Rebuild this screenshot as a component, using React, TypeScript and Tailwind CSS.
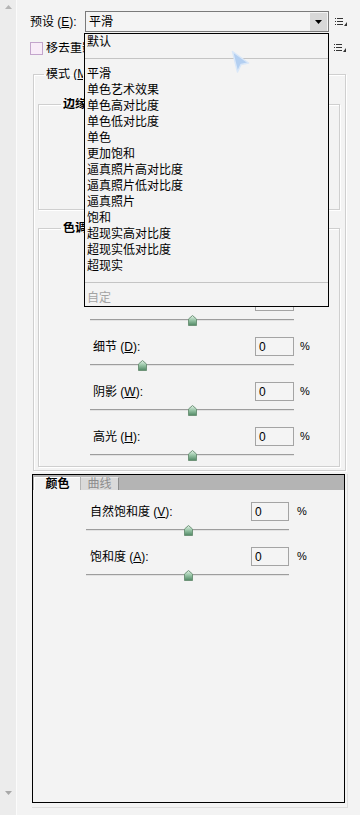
import React from 'react';

const presets = [
  '平滑',
  '单色艺术效果',
  '单色高对比度',
  '单色低对比度',
  '单色',
  '更加饱和',
  '逼真照片高对比度',
  '逼真照片低对比度',
  '逼真照片',
  '饱和',
  '超现实高对比度',
  '超现实低对比度',
  '超现实',
];

// small "list + corner" menu glyph used right of the rows
const MenuGlyph = () => (
  <svg width="13" height="8" viewBox="0 0 13 8" className="shrink-0">
    <rect x="0" y="0" width="1" height="1" fill="#333" />
    <rect x="2" y="0" width="6" height="1" fill="#333" />
    <rect x="0" y="3" width="1" height="1" fill="#333" />
    <rect x="2" y="3" width="6" height="1" fill="#333" />
    <rect x="0" y="6" width="1" height="1" fill="#333" />
    <rect x="2" y="6" width="6" height="1" fill="#333" />
    <path d="M12 4 L12 8 L9 8 Z" fill="#333" />
  </svg>
);

const Thumb = ({ className }: { className: string }) => (
  <svg width="9" height="11" viewBox="0 0 9 11" className={`absolute top-[-5px] ${className}`}>
    <defs>
      <linearGradient id="thumbFill" x1="0" y1="0" x2="0" y2="1">
        <stop offset="0" stopColor="#e3f1e7" />
        <stop offset="0.45" stopColor="#9cc8aa" />
        <stop offset="1" stopColor="#4f8763" />
      </linearGradient>
    </defs>
    <path d="M4.5 0.5 L8.5 4 L8.5 10.5 L0.5 10.5 L0.5 4 Z" fill="url(#thumbFill)" stroke="#6f9479" />
  </svg>
);

type SliderProps = {
  label?: React.ReactNode;
  labelCls: string;
  boxCls: string;
  pctCls: string;
  trackCls: string;
  thumbCls: string;
  hidden?: boolean;
};

const SliderRow = ({ label, labelCls, boxCls, pctCls, trackCls, thumbCls, hidden }: SliderProps) => (
  <div className="flex flex-col">
    <div className="flex h-[19px] items-center">
      <span className={`shrink-0 ${labelCls}`}>{label}</span>
      <div className={`flex h-[19px] shrink-0 items-center border border-[#a4a4a4] bg-[#f4f4f4] pl-[3px] ${boxCls}`}>
        {hidden ? '' : '0'}
      </div>
      {!hidden && <span className={`text-[11px] ${pctCls}`}>%</span>}
    </div>
    <div className={`relative mt-[8px] h-[2px] border-t border-[#9d9d9d] bg-[#e2e2e2] ${trackCls}`}>
      <Thumb className={thumbCls} />
    </div>
  </div>
);

const groupRow = {
  labelCls: 'w-[216px] pl-[54px]',
  boxCls: 'w-[39px]',
  pctCls: 'ml-[6px]',
  trackCls: 'ml-[51px] w-[204px]',
};

const panelRow = {
  labelCls: 'w-[218px] pl-[57px]',
  boxCls: 'w-[38px]',
  pctCls: 'ml-[8px]',
  trackCls: 'ml-[53px] w-[203px]',
};

const etched =
  'border border-[#cfcfcf] shadow-[inset_1px_1px_0_#ffffff,1px_1px_0_#ffffff]';

export default function App() {
  return (
    <div className="relative flex h-[815px] w-[360px] overflow-hidden bg-[#f3f3f3] font-['Liberation_Sans','Noto_Sans_CJK_SC',sans-serif] text-[12px] leading-none text-black">
      {/* left scroll strip */}
      <div className="flex w-[17px] shrink-0 flex-col items-center justify-between border-r border-[#fbfbfb] bg-[#ececec] pb-[20px] pt-[5px]">
        <svg width="7" height="4" viewBox="0 0 7 4">
          <path d="M3.5 0 L7 4 L0 4 Z" fill="#b4b4b4" />
        </svg>
        <svg width="7" height="4" viewBox="0 0 7 4">
          <path d="M0 0 L7 0 L3.5 4 Z" fill="#a8a8a8" />
        </svg>
      </div>

      <div className="flex flex-1 flex-col">
        {/* preset row */}
        <div className="mt-[11px] flex h-[21px] items-center pl-[13px]">
          <span className="w-[55px] shrink-0">
            预设 (<u>E</u>):
          </span>
          <div className="relative flex h-[21px] w-[244px] shrink-0 items-center border border-[#7a7a7a] bg-[#f4f4f4] pl-[3px]">
            <span>平滑</span>
            <div className="ml-auto mr-[1px] flex h-[18px] w-[17px] items-center justify-center bg-[#d8d8d8]">
              <svg width="7" height="4" viewBox="0 0 7 4">
                <path d="M0 0 L7 0 L3.5 4 Z" fill="#000" />
              </svg>
            </div>

            {/* open preset list */}
            <div className="absolute left-[-2px] top-[21px] z-10 flex h-[274px] w-[245px] flex-col border border-black bg-[#f3f3f3]">
              <div className="h-[16px] pl-[2px] leading-[16px]">默认</div>
              <div className="flex h-[16px] items-center">
                <div className="h-[1px] w-full bg-[#c4c4c4]" />
              </div>
              {presets.map((p) => (
                <div key={p} className="h-[16px] pl-[2px] leading-[16px]">
                  {p}
                </div>
              ))}
              <div className="flex h-[16px] items-center">
                <div className="h-[1px] w-full bg-[#c4c4c4]" />
              </div>
              <div className="h-[16px] pl-[2px] leading-[16px] text-[#a3a3a3]">自定</div>
            </div>
          </div>
          <div className="ml-[6px]">
            <MenuGlyph />
          </div>
        </div>

        {/* remove ghosts row */}
        <div className="mt-[9px] flex h-[14px] items-center pl-[13px] pr-[13px]">
          <div className="h-[13px] w-[13px] shrink-0 border border-[#c3a5cc] bg-[#f8ecf8]" />
          <span className="ml-[3px] w-[38px] overflow-hidden whitespace-nowrap">移去重影 (G)</span>
          <div className="ml-auto">
            <MenuGlyph />
          </div>
        </div>

        {/* mode group */}
        <fieldset className={`ml-[16px] mt-[13px] w-[313px] ${etched}`}>
          <legend className="ml-[10px] px-[2px] leading-[12px]">
            <span className="block w-[37px] overflow-hidden whitespace-nowrap">
              模式 (<u>M</u>)
            </span>
          </legend>

          <fieldset className={`mx-[4px] mt-[18px] w-[302px] ${etched}`}>
            <legend className="ml-[22px] px-[2px] font-bold leading-[12px]">
              <span className="block w-[21px] overflow-hidden whitespace-nowrap">边缘光</span>
            </legend>
            <div className="h-[99px]" />
          </fieldset>

          <fieldset className={`mx-[4px] mb-[3px] mt-[12px] w-[302px] ${etched}`}>
            <legend className="ml-[22px] px-[2px] font-bold leading-[12px]">
              <span className="block w-[21px] overflow-hidden whitespace-nowrap">色调和细节</span>
            </legend>
            <div className="flex flex-col gap-[16px] pb-[10px] pt-[13px]">
              <SliderRow hidden thumbCls="left-[98px]" {...groupRow} />
              <SliderRow hidden thumbCls="left-[98px]" {...groupRow} />
              <SliderRow label={<>细节 (<u>D</u>):</>} thumbCls="left-[48px]" {...groupRow} />
              <SliderRow label={<>阴影 (<u>W</u>):</>} thumbCls="left-[98px]" {...groupRow} />
              <SliderRow label={<>高光 (<u>H</u>):</>} thumbCls="left-[98px]" {...groupRow} />
            </div>
          </fieldset>
        </fieldset>

        {/* advanced tabs panel */}
        <div className="ml-[15px] mt-[3px] w-[316px] border-b border-r border-[#dedede] pb-[4px] pr-[2px]">
          <div className="flex h-[329px] w-[313px] flex-col border border-black">
            <div className="flex h-[15px] items-end bg-[#b4b4b4] pl-[1px]">
              <div className="flex h-[13px] w-[46px] items-center justify-center border-l border-t border-[#ffffff] bg-[#f3f3f3] font-bold">
                颜色
              </div>
              <div className="ml-[1px] flex h-[13px] w-[38px] items-center justify-center border-r border-t border-r-[#8c8c8c] border-t-[#e8e8e8] bg-[#dadada] text-[#8d8d8d]">
                曲线
              </div>
            </div>
            <div className="flex flex-col gap-[16px] pt-[12px]">
              <SliderRow label={<>自然饱和度 (<u>V</u>):</>} thumbCls="left-[98px]" {...panelRow} />
              <SliderRow label={<>饱和度 (<u>A</u>):</>} thumbCls="left-[98px]" {...panelRow} />
            </div>
          </div>
        </div>
      </div>

      {/* mouse pointer over the list */}
      <svg width="20" height="24" viewBox="0 0 20 24" className="absolute left-[231px] top-[50px] z-20">
        <path d="M1.5 1.5 L17.5 13 L10 14.5 L6.5 22 Z" fill="#b3cff1" stroke="#d9e7f8" strokeWidth="1.5" strokeLinejoin="round" />
      </svg>
    </div>
  );
}
